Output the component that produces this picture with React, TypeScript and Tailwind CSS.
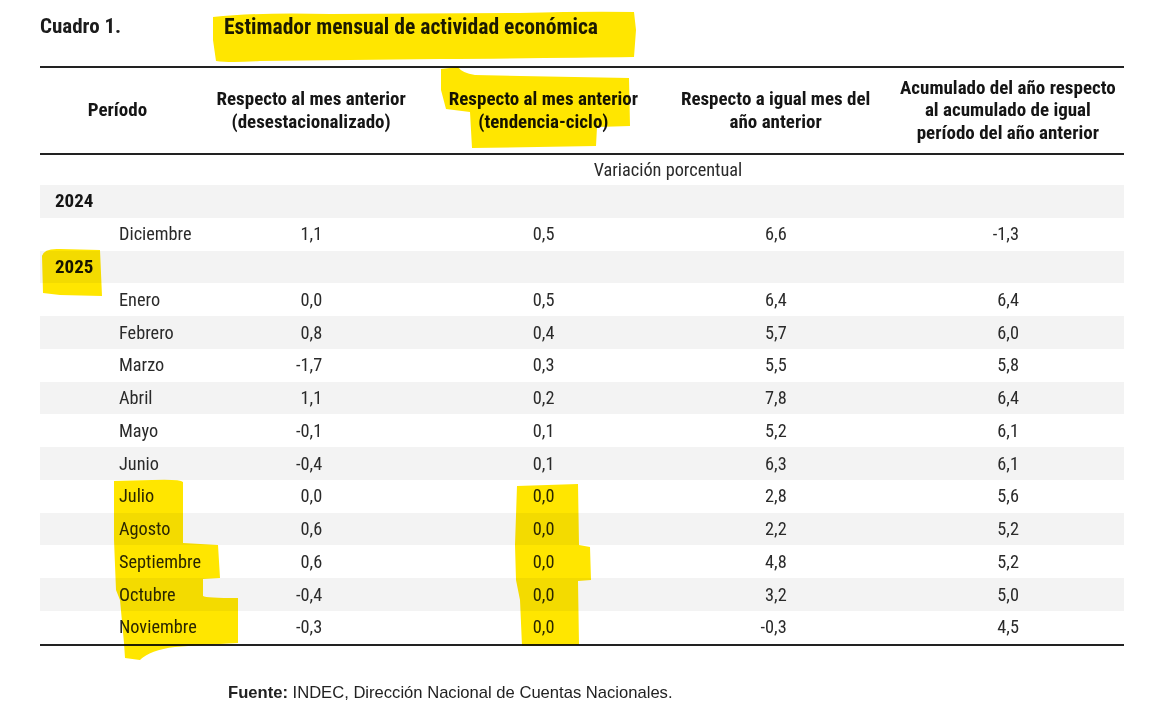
import React from 'react';

type Row = { label: string; year?: boolean; values?: string[] };

const rows: Row[] = [
  { label: '2024', year: true },
  { label: 'Diciembre', values: ['1,1', '0,5', '6,6', '-1,3'] },
  { label: '2025', year: true },
  { label: 'Enero', values: ['0,0', '0,5', '6,4', '6,4'] },
  { label: 'Febrero', values: ['0,8', '0,4', '5,7', '6,0'] },
  { label: 'Marzo', values: ['-1,7', '0,3', '5,5', '5,8'] },
  { label: 'Abril', values: ['1,1', '0,2', '7,8', '6,4'] },
  { label: 'Mayo', values: ['-0,1', '0,1', '5,2', '6,1'] },
  { label: 'Junio', values: ['-0,4', '0,1', '6,3', '6,1'] },
  { label: 'Julio', values: ['0,0', '0,0', '2,8', '5,6'] },
  { label: 'Agosto', values: ['0,6', '0,0', '2,2', '5,2'] },
  { label: 'Septiembre', values: ['0,6', '0,0', '4,8', '5,2'] },
  { label: 'Octubre', values: ['-0,4', '0,0', '3,2', '5,0'] },
  { label: 'Noviembre', values: ['-0,3', '0,0', '-0,3', '4,5'] },
];

const headers = [
  ['Respecto al mes anterior', '(desestacionalizado)'],
  ['Respecto al mes anterior', '(tendencia-ciclo)'],
  ['Respecto a igual mes del', 'año anterior'],
  ['Acumulado del año respecto', 'al acumulado de igual', 'período del año anterior'],
];

const narrow = 'font-[Roboto,sans-serif] [font-stretch:75%]';

// marcas de resaltador amarillo sobre la tabla
function Highlights() {
  return (
    <svg
      className="pointer-events-none absolute left-0 top-0 mix-blend-multiply"
      width="1173"
      height="724"
      viewBox="0 0 1173 724"
    >
      <g fill="#ffe600">
        <path d="M213 17 Q260 12 330 14 L520 13 Q590 11 634 12 L636 30 L634 57 Q560 58 440 59 L260 61 Q230 63 216 61 L213 40 Z" />
        <path d="M441 69 L458 67 Q462 73 475 75 L520 76 L629 78 L630 126 L597 127 L596 146 L472 148 L470 112 L446 109 L441 90 Z" />
        <path d="M42 256 Q44 248 60 249 L100 250 L102 296 L60 295 L43 293 Z" />
        <path d="M114 481 L152 480 Q180 479 183 482 L183 543 L218 545 L220 578 L203 579 L203 596 Q206 598 238 598 L238 643 Q200 645 175 647 Q150 650 140 660 L125 658 L124 643 L120 600 L116 590 L114 540 Z" />
        <path d="M517 486 L578 484 L579 545 L590 547 L591 580 L578 581 L579 645 L522 646 L520 600 L516 580 L515 545 Z" />
      </g>
    </svg>
  );
}

export default function App() {
  return (
    <div className="relative h-[724px] w-[1173px] overflow-hidden bg-white text-[#1c1c1c]">
      <div className="pl-[40px] pt-[13px]">
        <div className={`flex h-[28px] items-center font-bold ${narrow}`}>
          <span className="w-[184px] text-[21px]">Cuadro 1.</span>
          <span className="text-[21.6px]">Estimador mensual de actividad económica</span>
        </div>

        <div className={`mt-[25px] w-[1084px] ${narrow}`}>
          <div className="grid h-[89px] grid-cols-[155px_repeat(4,1fr)] items-center border-y-2 border-[#222] text-[19px] font-bold leading-[22.5px] text-[#151515]">
            <div className="text-center">Período</div>
            {headers.map((lines, i) => (
              <div key={i} className="text-center">
                {lines.map((l, j) => (
                  <div key={j}>{l}</div>
                ))}
              </div>
            ))}
          </div>

          <div className="grid h-[30px] grid-cols-[155px_1fr] items-center text-[18.3px] text-[#2a2a2a]">
            <div />
            <div className="pl-[17px] text-center">Variación porcentual</div>
          </div>

          <div className="border-b-2 border-[#222] text-[18.3px] text-[#2a2a2a]">
            {rows.map((r, i) => (
              <div
                key={r.label}
                className={`grid h-[32.75px] grid-cols-[155px_repeat(4,1fr)] items-center ${i % 2 === 0 ? 'bg-[#f3f3f3]' : 'bg-white'}`}
              >
                {r.year ? (
                  <div className="pl-[15px] text-[19px] font-bold text-[#151515]">{r.label}</div>
                ) : (
                  <div className="pl-[79px]">{r.label}</div>
                )}
                {(r.values ?? ['', '', '', '']).map((v, j) => (
                  <div key={j} className="pr-[105px] text-right">
                    {v}
                  </div>
                ))}
              </div>
            ))}
          </div>
        </div>

        <div className="mt-[35px] pl-[188px] font-['Liberation_Sans',Arial,sans-serif] text-[16.6px] text-[#222]">
          <span className="font-bold">Fuente:</span> INDEC, Dirección Nacional de Cuentas Nacionales.
        </div>
      </div>
      <Highlights />
    </div>
  );
}
